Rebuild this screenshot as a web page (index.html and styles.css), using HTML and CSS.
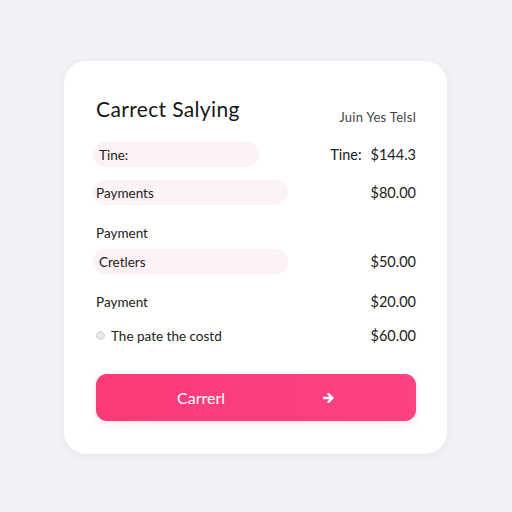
FILE: index.html
```html
<!DOCTYPE html>
<html>
<head>
<meta charset="utf-8">
<link rel="stylesheet" href="styles.css">
</head>
<body>
<div class="card">
  <div class="header">
    <h1 class="title">Carrect Salying</h1>
    <span class="sub">Juin Yes Telsl</span>
  </div>
  <div class="row r1">
    <span class="label pill pill-s">Tine:</span>
    <span class="amount"><span class="tine">Tine:</span>$144.3</span>
  </div>
  <div class="row r2">
    <span class="label pill pill-l">Payments</span>
    <span class="amount">$80.00</span>
  </div>
  <div class="row r3">
    <span class="label">Payment</span>
  </div>
  <div class="row r4">
    <span class="label pill pill-l ind">Cretlers</span>
    <span class="amount">$50.00</span>
  </div>
  <div class="row r5">
    <span class="label">Payment</span>
    <span class="amount">$20.00</span>
  </div>
  <div class="row r6">
    <span class="label"><span class="dot"></span>The pate the costd</span>
    <span class="amount">$60.00</span>
  </div>
  <button class="btn">
    <span class="btn-text">Carrerl</span>
    <svg class="arrow" width="12" height="12" viewBox="0 0 12 12"><path d="M1 6h8M5.5 2.2L9.5 6 5.5 9.8" fill="none" stroke="#fff" stroke-width="2.4" stroke-linecap="round" stroke-linejoin="round"/></svg>
  </button>
</div>
</body>
</html>
```
FILE: styles.css
```css
html, body {
  margin: 0;
  padding: 0;
}
body {
  width: 512px;
  height: 512px;
  background: #f1f2f5;
  font-family: "Lato", "Open Sans", sans-serif;
  color: #222;
  padding-top: 61px;
  box-sizing: border-box;
}
.card {
  margin-left: 64px;
  width: 383px;
  height: 393px;
  box-sizing: border-box;
  background: #fff;
  border-radius: 22px;
  box-shadow: 0 2px 10px rgba(0,0,0,0.05);
  padding: 33px 31px 0 32px;
  display: flex;
  flex-direction: column;
}
.header {
  display: flex;
  justify-content: space-between;
  align-items: flex-end;
  height: 30px;
}
.title {
  margin: 0;
  font-size: 21px;
  font-weight: 400;
  line-height: 30px;
  color: #161616;
  letter-spacing: 0.35px;
}
.sub {
  font-size: 13px;
  line-height: 14px;
  color: #444;
  letter-spacing: 0.3px;
}
.row {
  display: flex;
  justify-content: space-between;
  align-items: center;
  height: 25px;
  font-size: 13.5px;
}
.r1 { margin-top: 18px; }
.r2 { margin-top: 13px; }
.r3 { margin-top: 15px; }
.r4 { margin-top: 4px; }
.r5 { margin-top: 15px; }
.r6 { margin-top: 9px; }
.label {
  display: flex;
  align-items: center;
  height: 25px;
}
.pill {
  background: #fdf2f6;
  border-radius: 13px;
  margin-left: -3px;
  padding-left: 5px;
  box-sizing: border-box;
}
.pill-s { width: 166px; padding-left: 6px; }
.pill-l { width: 195px; padding-left: 3px; }
.ind { padding-left: 6px; }
.amount {
  font-size: 14.5px;
  color: #222;
}
.tine {
  margin-right: 9px;
}
.dot {
  width: 9px;
  height: 9px;
  border-radius: 50%;
  background: #e8e8e8;
  border: 1px solid #d2d2d2;
  box-sizing: border-box;
  margin-left: 0;
  margin-right: 6px;
}
.btn {
  margin-top: 26px;
  height: 47px;
  width: 320px;
  border: none;
  border-radius: 11px;
  background: linear-gradient(90deg, #fc3a78, #fd4282);
  color: #fff;
  font-family: "Lato", "Open Sans", sans-serif;
  font-size: 16px;
  display: flex;
  align-items: center;
  padding: 0 0 0 81px;
  box-shadow: 0 2px 6px rgba(252,58,120,0.15);
}
.btn-text {
  width: 146px;
  text-align: left;
}
.arrow {
  display: block;
}
```
